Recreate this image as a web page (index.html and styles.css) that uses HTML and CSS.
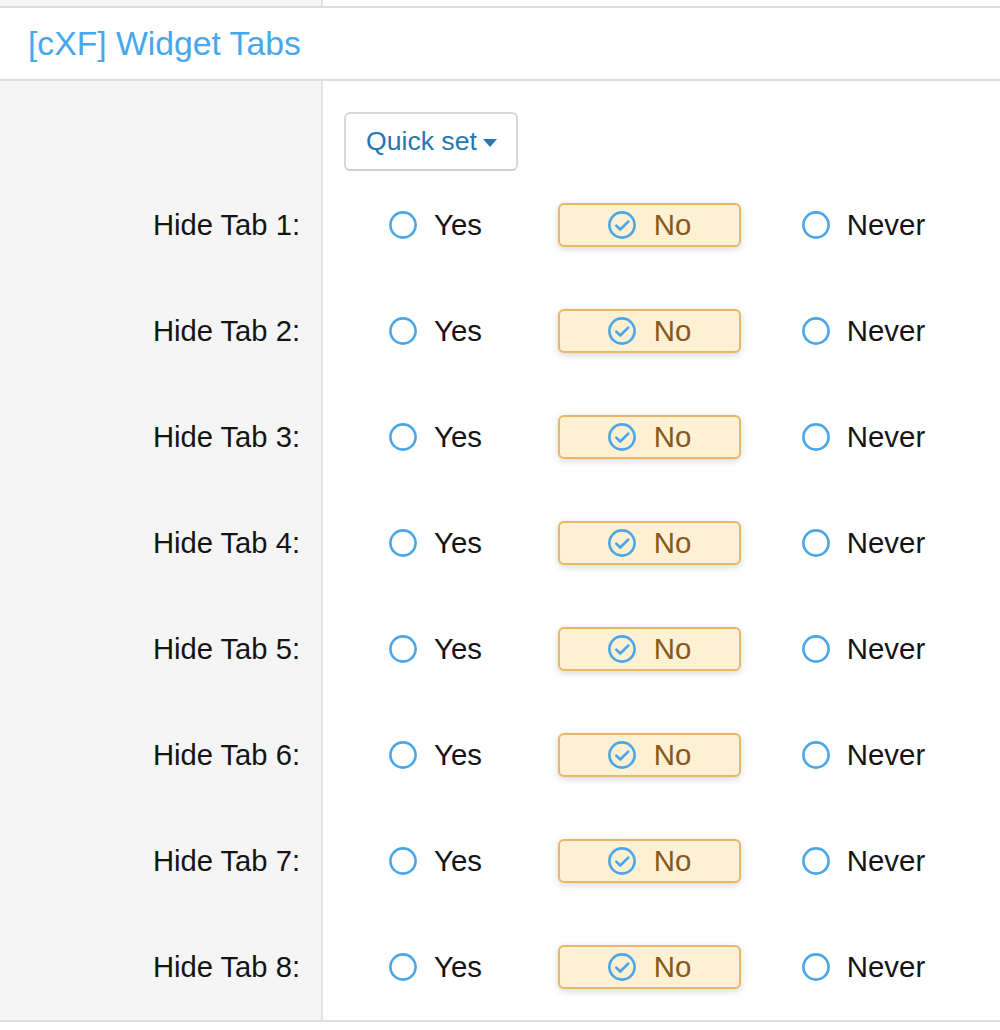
FILE: index.html
```html
<!DOCTYPE html>
<html>
<head>
<meta charset="utf-8">
<title>[cXF] Widget Tabs</title>
<link rel="stylesheet" href="styles.css">
</head>
<body>
<div class="top">
  <div class="top-side"></div>
  <div class="top-main"></div>
</div>
<h2 class="block-header">[cXF] Widget Tabs</h2>
<div class="form">
  <div class="form-row quick-row">
    <div class="row-label"></div>
    <div class="row-control">
      <button class="quick-btn">Quick set<span class="caret"></span></button>
    </div>
  </div>

  <div class="form-row">
    <div class="row-label">Hide Tab 1:</div>
    <div class="row-control choices">
      <label class="choice"><svg class="ico" viewBox="0 0 28 28"><circle cx="14" cy="14" r="12.6"/></svg><span>Yes</span></label>
      <label class="choice selected"><svg class="ico" viewBox="0 0 28 28"><circle cx="14" cy="14" r="12.6"/><path d="M8.3 14.6 L12.3 18.5 L20.2 10.6"/></svg><span>No</span></label>
      <label class="choice"><svg class="ico" viewBox="0 0 28 28"><circle cx="14" cy="14" r="12.6"/></svg><span>Never</span></label>
    </div>
  </div>
  <div class="form-row">
    <div class="row-label">Hide Tab 2:</div>
    <div class="row-control choices">
      <label class="choice"><svg class="ico" viewBox="0 0 28 28"><circle cx="14" cy="14" r="12.6"/></svg><span>Yes</span></label>
      <label class="choice selected"><svg class="ico" viewBox="0 0 28 28"><circle cx="14" cy="14" r="12.6"/><path d="M8.3 14.6 L12.3 18.5 L20.2 10.6"/></svg><span>No</span></label>
      <label class="choice"><svg class="ico" viewBox="0 0 28 28"><circle cx="14" cy="14" r="12.6"/></svg><span>Never</span></label>
    </div>
  </div>
  <div class="form-row">
    <div class="row-label">Hide Tab 3:</div>
    <div class="row-control choices">
      <label class="choice"><svg class="ico" viewBox="0 0 28 28"><circle cx="14" cy="14" r="12.6"/></svg><span>Yes</span></label>
      <label class="choice selected"><svg class="ico" viewBox="0 0 28 28"><circle cx="14" cy="14" r="12.6"/><path d="M8.3 14.6 L12.3 18.5 L20.2 10.6"/></svg><span>No</span></label>
      <label class="choice"><svg class="ico" viewBox="0 0 28 28"><circle cx="14" cy="14" r="12.6"/></svg><span>Never</span></label>
    </div>
  </div>
  <div class="form-row">
    <div class="row-label">Hide Tab 4:</div>
    <div class="row-control choices">
      <label class="choice"><svg class="ico" viewBox="0 0 28 28"><circle cx="14" cy="14" r="12.6"/></svg><span>Yes</span></label>
      <label class="choice selected"><svg class="ico" viewBox="0 0 28 28"><circle cx="14" cy="14" r="12.6"/><path d="M8.3 14.6 L12.3 18.5 L20.2 10.6"/></svg><span>No</span></label>
      <label class="choice"><svg class="ico" viewBox="0 0 28 28"><circle cx="14" cy="14" r="12.6"/></svg><span>Never</span></label>
    </div>
  </div>
  <div class="form-row">
    <div class="row-label">Hide Tab 5:</div>
    <div class="row-control choices">
      <label class="choice"><svg class="ico" viewBox="0 0 28 28"><circle cx="14" cy="14" r="12.6"/></svg><span>Yes</span></label>
      <label class="choice selected"><svg class="ico" viewBox="0 0 28 28"><circle cx="14" cy="14" r="12.6"/><path d="M8.3 14.6 L12.3 18.5 L20.2 10.6"/></svg><span>No</span></label>
      <label class="choice"><svg class="ico" viewBox="0 0 28 28"><circle cx="14" cy="14" r="12.6"/></svg><span>Never</span></label>
    </div>
  </div>
  <div class="form-row">
    <div class="row-label">Hide Tab 6:</div>
    <div class="row-control choices">
      <label class="choice"><svg class="ico" viewBox="0 0 28 28"><circle cx="14" cy="14" r="12.6"/></svg><span>Yes</span></label>
      <label class="choice selected"><svg class="ico" viewBox="0 0 28 28"><circle cx="14" cy="14" r="12.6"/><path d="M8.3 14.6 L12.3 18.5 L20.2 10.6"/></svg><span>No</span></label>
      <label class="choice"><svg class="ico" viewBox="0 0 28 28"><circle cx="14" cy="14" r="12.6"/></svg><span>Never</span></label>
    </div>
  </div>
  <div class="form-row">
    <div class="row-label">Hide Tab 7:</div>
    <div class="row-control choices">
      <label class="choice"><svg class="ico" viewBox="0 0 28 28"><circle cx="14" cy="14" r="12.6"/></svg><span>Yes</span></label>
      <label class="choice selected"><svg class="ico" viewBox="0 0 28 28"><circle cx="14" cy="14" r="12.6"/><path d="M8.3 14.6 L12.3 18.5 L20.2 10.6"/></svg><span>No</span></label>
      <label class="choice"><svg class="ico" viewBox="0 0 28 28"><circle cx="14" cy="14" r="12.6"/></svg><span>Never</span></label>
    </div>
  </div>
  <div class="form-row">
    <div class="row-label">Hide Tab 8:</div>
    <div class="row-control choices">
      <label class="choice"><svg class="ico" viewBox="0 0 28 28"><circle cx="14" cy="14" r="12.6"/></svg><span>Yes</span></label>
      <label class="choice selected"><svg class="ico" viewBox="0 0 28 28"><circle cx="14" cy="14" r="12.6"/><path d="M8.3 14.6 L12.3 18.5 L20.2 10.6"/></svg><span>No</span></label>
      <label class="choice"><svg class="ico" viewBox="0 0 28 28"><circle cx="14" cy="14" r="12.6"/></svg><span>Never</span></label>
    </div>
  </div>
</div>
</body>
</html>
```
FILE: styles.css
```css
html, body {
  margin: 0;
  padding: 0;
  background: #ffffff;
  font-family: "Liberation Sans", Arial, Helvetica, sans-serif;
  color: #141414;
}

.top {
  display: flex;
  height: 6px;
  border-bottom: 2px solid #dedede;
}
.top-side {
  width: 321px;
  background: #f5f5f5;
  border-right: 2px solid #e2e2e2;
}
.top-main {
  flex: 1;
}

.block-header {
  margin: 0;
  display: flex;
  align-items: center;
  padding-left: 28px;
  font-size: 33.7px;
  font-weight: normal;
  color: #47a7eb;
  border-bottom: 2px solid #dedede;
  box-sizing: border-box;
  height: 73px;
}

.form {
  border-bottom: 2px solid #dedede;
}

.form-row {
  display: flex;
  height: 106px;
}
.quick-row {
  height: 91px;
}

.row-label {
  width: 323px;
  box-sizing: border-box;
  background: #f5f5f5;
  border-right: 2px solid #e2e2e2;
  display: flex;
  align-items: center;
  justify-content: flex-end;
  padding-right: 21px;
  font-size: 29.2px;
  color: #141414;
}

.row-control {
  flex: 1;
  padding-left: 21px;
}

.quick-row .row-control {
  padding-top: 31px;
}

.quick-btn {
  display: flex;
  align-items: center;
  height: 59px;
  width: 174px;
  box-sizing: border-box;
  padding: 0 0 0 20px;
  background: #ffffff;
  border: 2px solid #d8d8d8;
  border-bottom-color: #cfcfcf;
  border-radius: 6px;
  font-family: "Liberation Sans", Arial, Helvetica, sans-serif;
  font-size: 26.6px;
  color: #2577b1;
}

.caret {
  display: inline-block;
  width: 0;
  height: 0;
  margin-left: 6px;
  margin-top: 2px;
  border-left: 7.5px solid transparent;
  border-right: 7.5px solid transparent;
  border-top: 8px solid #2577b1;
}

.choices {
  display: flex;
  align-items: center;
  gap: 31px;
}

.choice {
  width: 183px;
  height: 44px;
  box-sizing: border-box;
  border: 2px solid transparent;
  border-radius: 6px;
  display: flex;
  align-items: center;
  justify-content: center;
  gap: 17px;
  font-size: 29.4px;
  color: #141414;
}

.choice.selected {
  background: #fef0d3;
  border-color: #e8b768;
  color: #87571b;
  box-shadow: 0 2px 7px rgba(0, 0, 0, 0.16);
  gap: 18px;
}

.ico {
  width: 28px;
  height: 28px;
  flex: none;
}
.ico circle {
  fill: none;
  stroke: #4aa6e6;
  stroke-width: 2.6;
}
.ico path {
  fill: none;
  stroke: #4aa6e6;
  stroke-width: 2.7;
  stroke-linecap: round;
  stroke-linejoin: round;
}
```
